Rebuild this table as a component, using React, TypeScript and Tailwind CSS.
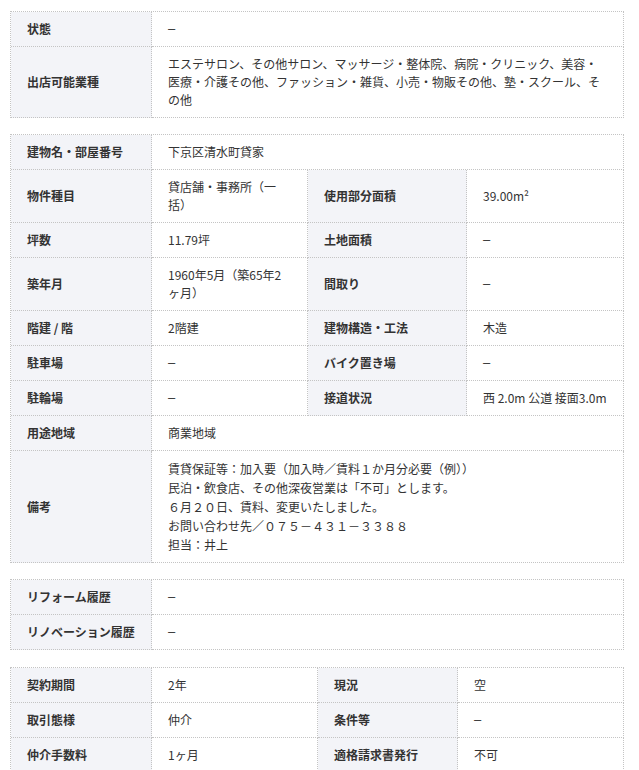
import React from "react";

const TH = "bg-[#f3f4f8] font-bold text-[#333] px-4 py-2 flex items-center border-r border-b border-dotted border-[#c4c4c4]";
const TD = "text-[#333] px-4 py-2 flex flex-col justify-center border-r border-b border-dotted border-[#c4c4c4]";

const DASH = "__dash__";

function Lines({ lines }: { lines: string[] }) {
  return (
    <>
      {lines.map((l, i) =>
        l === DASH ? (
          <span key={i} className="block whitespace-nowrap font-['Liberation_Sans',sans-serif] text-[13px]">
            –
          </span>
        ) : (
          <span key={i} className="block whitespace-nowrap">
            {l}
          </span>
        )
      )}
    </>
  );
}

type Cell = { h: string; v: string[]; lh?: string };

function Row2({ h, v, lh }: Cell) {
  return (
    <div className="grid grid-cols-[141px_1fr]">
      <div className={TH}>{h}</div>
      <div className={TD + (lh ? " " + lh : "")}>
        <Lines lines={v} />
      </div>
    </div>
  );
}

function Row4({ a, b, cols }: { a: Cell; b: Cell; cols: string }) {
  return (
    <div className={"grid " + cols}>
      <div className={TH}>{a.h}</div>
      <div className={TD}>
        <Lines lines={a.v} />
      </div>
      <div className={TH}>{b.h}</div>
      <div className={TD}>
        <Lines lines={b.v} />
      </div>
    </div>
  );
}

const C2 = "grid-cols-[141px_156px_159px_1fr]";
const C4 = "grid-cols-[141px_166px_140px_1fr]";

export default function App() {
  return (
    <div className="bg-white min-h-[770px] pt-[11px] pl-[10px] text-[12px] leading-[18px] font-['Noto_Sans_CJK_JP','Noto_Sans',sans-serif]">
      <div className="w-[614px]">
        <div className="border-t border-l border-dotted border-[#c4c4c4] mb-[16px]">
          <Row2 h="状態" v={[DASH]} />
          <Row2
            h="出店可能業種"
            v={[
              "エステサロン、その他サロン、マッサージ・整体院、病院・クリニック、美容・",
              "医療・介護その他、ファッション・雑貨、小売・物販その他、塾・スクール、そ",
              "の他",
            ]}
          />
        </div>

        <div className="border-t border-l border-dotted border-[#c4c4c4] mb-[16px]">
          <Row2 h="建物名・部屋番号" v={["下京区清水町貸家"]} />
          <Row4 cols={C2} a={{ h: "物件種目", v: ["貸店舗・事務所（一", "括）"] }} b={{ h: "使用部分面積", v: ["39.00m²"] }} />
          <Row4 cols={C2} a={{ h: "坪数", v: ["11.79坪"] }} b={{ h: "土地面積", v: [DASH] }} />
          <Row4 cols={C2} a={{ h: "築年月", v: ["1960年5月（築65年2", "ヶ月）"] }} b={{ h: "間取り", v: [DASH] }} />
          <Row4 cols={C2} a={{ h: "階建 / 階", v: ["2階建"] }} b={{ h: "建物構造・工法", v: ["木造"] }} />
          <Row4 cols={C2} a={{ h: "駐車場", v: [DASH] }} b={{ h: "バイク置き場", v: [DASH] }} />
          <Row4 cols={C2} a={{ h: "駐輪場", v: [DASH] }} b={{ h: "接道状況", v: ["西 2.0m 公道 接面3.0m"] }} />
          <Row2 h="用途地域" v={["商業地域"]} />
          <Row2
            h="備考"
            lh="leading-[19px]"
            v={[
              "賃貸保証等：加入要（加入時／賃料１か月分必要（例））",
              "民泊・飲食店、その他深夜営業は「不可」とします。",
              "６月２０日、賃料、変更いたしました。",
              "お問い合わせ先／０７５－４３１－３３８８",
              "担当：井上",
            ]}
          />
        </div>

        <div className="border-t border-l border-dotted border-[#c4c4c4] mb-[17px]">
          <Row2 h="リフォーム履歴" v={[DASH]} />
          <Row2 h="リノベーション履歴" v={[DASH]} />
        </div>

        <div className="border-t border-l border-dotted border-[#c4c4c4]">
          <Row4 cols={C4} a={{ h: "契約期間", v: ["2年"] }} b={{ h: "現況", v: ["空"] }} />
          <Row4 cols={C4} a={{ h: "取引態様", v: ["仲介"] }} b={{ h: "条件等", v: [DASH] }} />
          <Row4 cols={C4} a={{ h: "仲介手数料", v: ["1ヶ月"] }} b={{ h: "適格請求書発行", v: ["不可"] }} />
        </div>
      </div>
    </div>
  );
}
